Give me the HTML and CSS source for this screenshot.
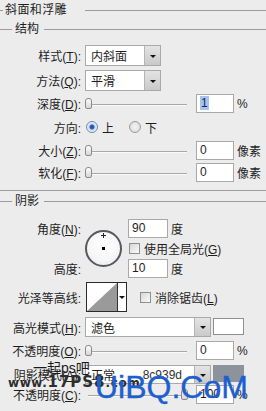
FILE: index.html
```html
<!DOCTYPE html>
<html lang="zh-CN">

<head>
  <meta charset="UTF-8">
  <meta name="viewport" content="width=device-width, initial-scale=1.0">
  <title>斜面和浮雕</title>
  <link rel="stylesheet" href="styles.css">
</head>

<body>
  <div class="panel">
    <div class="legend legend-top"><span>斜面和浮雕</span></div>
    <div class="legend legend-sub"><span>结构</span></div>

    <div class="row row-style">
      <label class="lbl">样式(<u>T</u>):</label>
      <div class="select sel-short"><span>内斜面</span><i class="drop"></i></div>
    </div>
    <div class="row row-method">
      <label class="lbl">方法(<u>Q</u>):</label>
      <div class="select sel-short"><span>平滑</span><i class="drop"></i></div>
    </div>
    <div class="row row-depth">
      <label class="lbl">深度(<u>D</u>):</label>
      <div class="slider"><i class="thumb"></i></div>
      <div class="field"><span class="picked">1</span></div>
      <span class="unit">%</span>
    </div>
    <div class="row row-dir">
      <label class="lbl">方向:</label>
      <span class="radio on"></span><span class="opt">上</span>
      <span class="radio"></span><span class="opt">下</span>
    </div>
    <div class="row row-size">
      <label class="lbl">大小(<u>Z</u>):</label>
      <div class="slider"><i class="thumb"></i></div>
      <div class="field">0</div>
      <span class="unit">像素</span>
    </div>
    <div class="row row-soft">
      <label class="lbl">软化(<u>F</u>):</label>
      <div class="slider"><i class="thumb"></i></div>
      <div class="field">0</div>
      <span class="unit">像素</span>
    </div>

    <div class="sep"></div>
    <div class="legend legend-sub legend-shadow"><span>阴影</span></div>

    <div class="angle">
      <label class="lbl a-l1">角度(<u>N</u>):</label>
      <div class="dial"><i class="cross"></i><i class="dot"></i></div>
      <div class="a-c1"><div class="field field-sm">90</div><span class="unit">度</span></div>
      <div class="a-c2"><span class="check"></span><span class="opt">使用全局光(<u>G</u>)</span></div>
      <label class="lbl a-l3">高度:</label>
      <div class="a-c3"><div class="field field-sm">10</div><span class="unit">度</span></div>
    </div>

    <div class="row row-contour">
      <label class="lbl">光泽等高线:</label>
      <div class="contour">
        <svg width="30" height="28" viewBox="0 0 30 28">
          <polygon points="0,28 30,0 30,28" fill="#9a9a9a" />
        </svg>
        <i class="drop drop-flat"></i>
      </div>
      <span class="check"></span><span class="opt">消除锯齿(<u>L</u>)</span>
    </div>

    <div class="row row-hl">
      <label class="lbl">高光模式(<u>H</u>):</label>
      <div class="select sel-long"><span>滤色</span><i class="drop"></i></div>
      <span class="swatch"></span>
    </div>
    <div class="row row-op1">
      <label class="lbl">不透明度(<u>O</u>):</label>
      <div class="slider"><i class="thumb"></i></div>
      <div class="field">0</div>
      <span class="unit">%</span>
    </div>
    <div class="row row-sh">
      <label class="lbl">阴影模式(<u>A</u>):</label>
      <div class="select sel-long"><span>正常</span><em class="hex">8c939d</em><i class="drop"></i></div>
      <span class="swatch swatch-gray"></span>
    </div>
    <div class="row row-op2">
      <label class="lbl">不透明度(<u>C</u>):</label>
      <div class="slider"><i class="thumb thumb-end"></i></div>
      <div class="field">100</div>
      <span class="unit">%</span>
    </div>

    <!-- watermarks over the bottom -->
    <div class="wm wm-cn">一起ps吧</div>
    <div class="wm wm-url">www.<b>17PS8</b>.com</div>
    <div class="wm wm-big">UiBQ.CoM</div>
  </div>
</body>

</html>
```

FILE: styles.css
```css
body {
  margin: 0;
  padding: 0;
  background-color: #ececec;
  font-family: "Liberation Sans", "Noto Sans CJK SC", sans-serif;
  font-size: 12px;
  color: #1e1e1e;
}

.panel {
  position: relative;
  width: 266px;
  height: 411px;
  overflow: hidden;
}

u {
  text-decoration: underline;
}

/* group headings with etched lines */
.legend {
  display: flex;
  align-items: center;
  height: 20px;
  line-height: 20px;
}

.legend::before,
.legend::after {
  content: "";
  height: 1px;
  background: #9c9c9c;
}

.legend::after {
  flex: 1;
}

.legend-top::before {
  width: 3px;
  margin-right: 2px;
}

.legend-top::after {
  margin-left: 18px;
}

.legend-top span {
  letter-spacing: 0.4px;
}

.legend-sub {
  height: 18px;
}

.legend-sub::before {
  width: 12px;
  margin-right: 3px;
}

.legend-sub::after {
  margin-left: 5px;
}

.legend-shadow {
  height: 20px;
}

.sep {
  margin-top: 8px;
  border-top: 1px solid #9c9c9c;
}

/* rows */
.row {
  display: flex;
  align-items: center;
}

.lbl {
  width: 81px;
  text-align: right;
  flex-shrink: 0;
  white-space: nowrap;
}

.row-style { margin-top: 7px; height: 21px; }
.row-method { margin-top: 4px; height: 21px; }
.row-depth { margin-top: 3px; height: 19px; }
.row-dir { margin-top: 5px; height: 18px; }
.row-size { margin-top: 5px; height: 19px; }
.row-soft { margin-top: 3px; height: 19px; }
.row-contour { margin-top: 4px; height: 30px; }
.row-hl { margin-top: 5px; height: 20px; }
.row-op1 { margin-top: 4px; height: 19px; }
.row-sh { margin-top: 5px; height: 19px; }
.row-op2 { margin-top: 1px; height: 19px; }

/* dropdowns */
.select {
  box-sizing: border-box;
  height: 100%;
  margin-left: 4px;
  display: flex;
  align-items: center;
  background: #fff;
  border: 1px solid #a9a9a9;
  padding-left: 5px;
}

.select span {
  flex: 1;
}

.sel-short {
  width: 76px;
}

.sel-long {
  width: 126px;
}

.hex {
  font-style: normal;
  color: #333;
  margin-right: 12px;
}

.drop {
  position: relative;
  width: 15px;
  height: 100%;
  background: linear-gradient(#e4e4e4, #c9c9c9);
  border-left: 1px solid #b5b5b5;
}

.drop::after {
  content: "";
  position: absolute;
  left: 5px;
  top: 50%;
  margin-top: -1px;
  border-left: 3px solid transparent;
  border-right: 3px solid transparent;
  border-top: 3px solid #111;
}

.drop-flat {
  width: 8px;
  background: #fff;
  border-left: 1px solid #333;
}

.drop-flat::after {
  left: 1px;
  border-left-width: 3px;
  border-right-width: 3px;
}

/* sliders */
.slider {
  position: relative;
  width: 104px;
  height: 100%;
  margin-left: 4px;
}

.slider::before {
  content: "";
  position: absolute;
  left: 3px;
  right: 2px;
  top: 50%;
  height: 1px;
  background: #a8a8a8;
  box-shadow: 0 1px 0 #fafafa;
}

.thumb {
  position: absolute;
  left: 0;
  top: 4px;
  width: 5px;
  height: 9px;
  background: linear-gradient(#fdfdfd, #d6d6d6);
  border: 1px solid #8a8a8a;
  border-radius: 3px 3px 2px 2px;
}

.thumb-end {
  left: 96px;
}

/* text fields */
.field {
  box-sizing: border-box;
  width: 38px;
  height: 19px;
  margin-left: 7px;
  padding-left: 3px;
  line-height: 17px;
  background: #fff;
  border: 1px solid #a9a9a9;
}

.field-sm {
  width: 40px;
  margin-left: 0;
  height: 19px;
}

.picked {
  background: #a9c3ec;
  color: #15246a;
  padding: 0 1px;
}

.unit {
  margin-left: 3px;
}

/* radios and checks */
.radio {
  box-sizing: border-box;
  width: 12px;
  height: 12px;
  margin-left: 5px;
  border-radius: 50%;
  border: 1px solid #9a9a9a;
  background: radial-gradient(#f4f4f4, #d8d8d8);
}

.radio.on {
  background: radial-gradient(#1d4f9a 0, #2d64b8 2px, #c7d8ef 3px, #eef2f8 5px);
  border-color: #6d87b3;
}

.opt {
  margin-left: 4px;
}

.row-dir .opt {
  width: 22px;
}

.check {
  box-sizing: border-box;
  width: 11px;
  height: 11px;
  border: 1px solid #8e8f8f;
  background: linear-gradient(135deg, #d6d6d6, #fbfbfb);
}

/* angle block */
.angle {
  display: grid;
  grid-template-columns: 81px 47px 1fr;
  grid-template-rows: 19px 21px 19px;
  margin-top: 8px;
}

.a-l1 { grid-column: 1; grid-row: 1; align-self: center; }
.a-l3 { grid-column: 1; grid-row: 3; align-self: center; }

.a-c1,
.a-c2,
.a-c3 {
  grid-column: 3;
  display: flex;
  align-items: center;
}

.a-c1 { grid-row: 1; }
.a-c2 { grid-row: 2; padding-left: 1px; }
.a-c3 { grid-row: 3; }

.a-c2 .opt {
  margin-left: 4px;
}

.dial {
  grid-column: 2;
  grid-row: 1 / 4;
  align-self: center;
  position: relative;
  box-sizing: border-box;
  width: 37px;
  height: 37px;
  margin-left: 4px;
  border-radius: 50%;
  border: 2px solid #55595e;
  background: radial-gradient(circle at 50% 40%, #ffffff, #f6f6f6 60%, #e2e2e2);
}

.dot {
  position: absolute;
  left: 15px;
  top: 15px;
  width: 3px;
  height: 3px;
  background: #000;
}

.cross {
  position: absolute;
  left: 14px;
  top: 1px;
  width: 5px;
  height: 5px;
}

.cross::before,
.cross::after {
  content: "";
  position: absolute;
  background: #222;
}

.cross::before {
  left: 2px;
  top: 0;
  width: 1px;
  height: 5px;
}

.cross::after {
  left: 0;
  top: 2px;
  width: 5px;
  height: 1px;
}

/* contour picker */
.contour {
  box-sizing: border-box;
  display: flex;
  width: 41px;
  height: 30px;
  margin-left: 5px;
  margin-right: 13px;
  border: 1px solid #2a2a2a;
  background: #fff;
}

.contour svg {
  display: block;
}

.contour .drop {
  height: 28px;
}

.row-contour .opt {
  margin-left: 4px;
}

/* colour swatches */
.swatch {
  box-sizing: border-box;
  width: 31px;
  height: 17px;
  margin-left: 2px;
  align-self: flex-start;
  margin-top: 1px;
  background: #fff;
  border: 1px solid #8f8f8f;
}

.swatch-gray {
  background: #8c939d;
  border-color: #8c939d;
  margin-top: 0;
}

/* watermarks */
.wm {
  position: absolute;
  z-index: 5;
  white-space: nowrap;
}

.wm-cn {
  left: 33px;
  top: 357px;
  font-size: 14px;
  color: #1a1a1a;
}

.wm-url {
  left: 8px;
  top: 373px;
  font-family: "DejaVu Sans", sans-serif;
  font-weight: bold;
  font-size: 12px;
  color: #2e2e2e;
  letter-spacing: 0.6px;
}

.wm-url b {
  font-size: 15px;
  letter-spacing: 1px;
}

.wm-big {
  left: 95px;
  top: 371px;
  font-family: "Liberation Sans", sans-serif;
  font-size: 32px;
  line-height: 32px;
  color: #1d5fd0;
  -webkit-text-stroke: 0.4px #1d5fd0;
}
```
